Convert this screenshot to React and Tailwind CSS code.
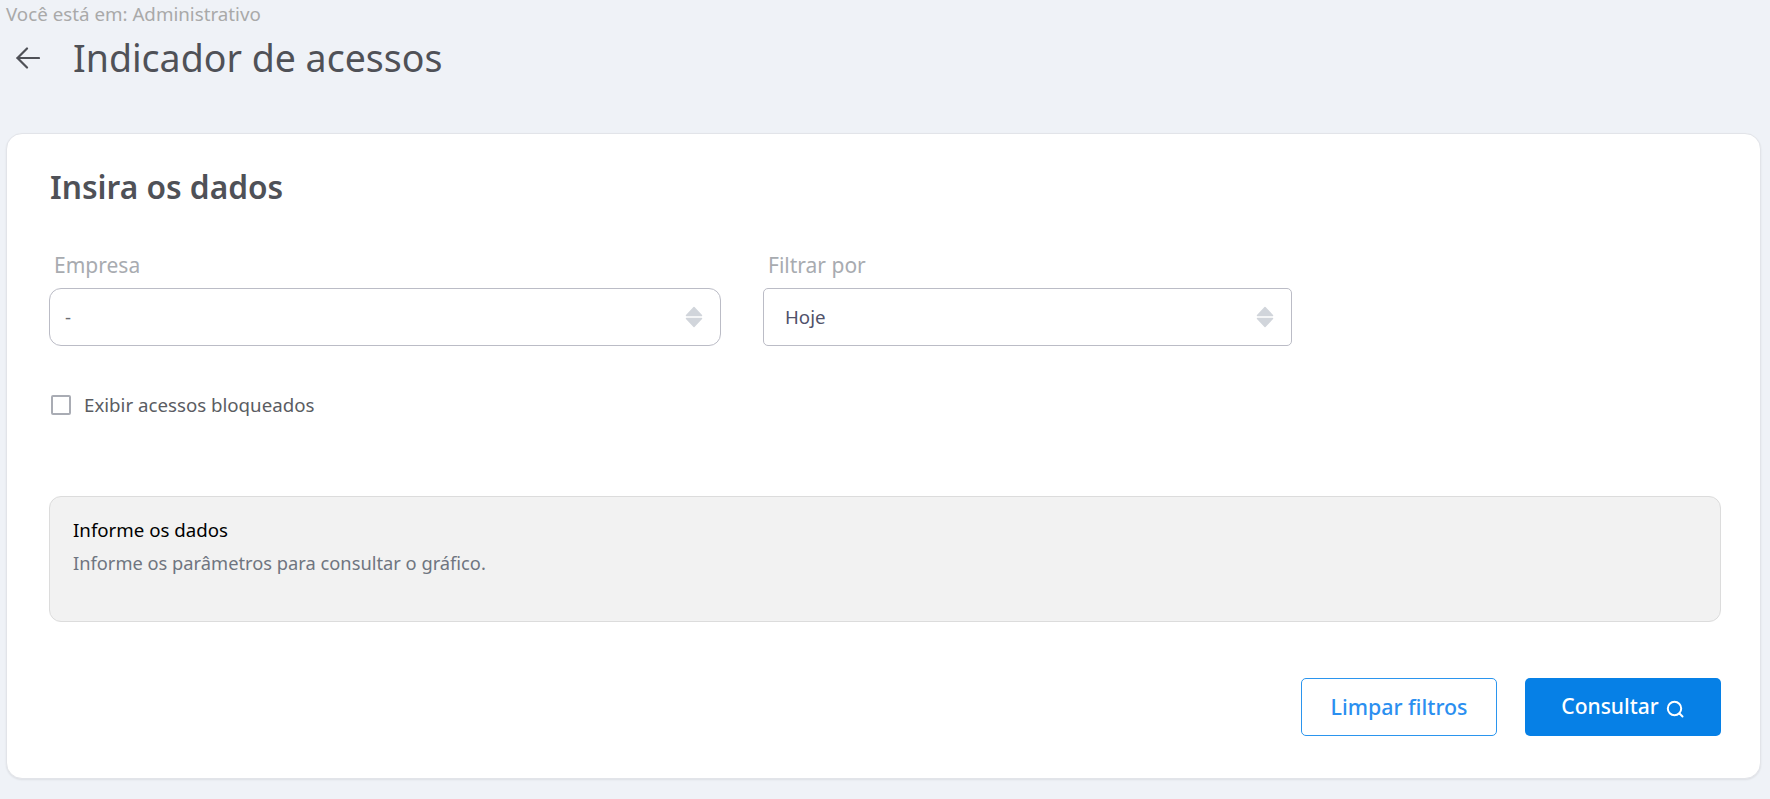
import React from 'react';

const Chevrons = () => (
  <svg width="18" height="22" viewBox="0 0 18 22" className="shrink-0">
    <path d="M9 1.5 L16.5 9.5 H1.5 Z" fill="#d1d5db" stroke="#d1d5db" strokeWidth="1.5" strokeLinejoin="round" />
    <path d="M9 20.5 L16.5 12.5 H1.5 Z" fill="#d1d5db" stroke="#d1d5db" strokeWidth="1.5" strokeLinejoin="round" />
  </svg>
);

const SelectField = ({ label, value, className, rounded, padding, valueColor }) => (
  <div className={className}>
    <div className="h-[40px] pl-[5px] pt-[3px] text-[21px] leading-[28px] text-[#a8abb0]">{label}</div>
    <div className={`flex h-[58px] items-center justify-between border border-[#bbbcc6] bg-white ${rounded} ${padding}`}>
      <span className={`text-[18.7px] ${valueColor}`}>{value}</span>
      <Chevrons />
    </div>
  </div>
);

export default function App() {
  return (
    <div className="h-[799px] overflow-hidden bg-[#eff2f7] font-['Noto_Sans',sans-serif]">
      <div className="h-[28px] pl-[6px] text-[18.75px] leading-[28px] text-[#a9a9a9]">Você está em: Administrativo</div>
      <div className="flex h-[60px] items-center pl-[16px]">
        <svg width="24" height="24" viewBox="0 0 24 24" fill="none" stroke="#4f5157" strokeWidth="2.2" strokeLinecap="round" strokeLinejoin="round">
          <path d="M23 12 H1.5" />
          <path d="M11 2.5 L1.5 12 L11 21.5" />
        </svg>
        <h1 className="ml-[33px] text-[37.5px] leading-[48px] font-normal text-[#4f5157]">Indicador de acessos</h1>
      </div>

      <div className="mx-[6px] mt-[45px] h-[646px] w-[1755px] rounded-[16px] border border-[#e2e4e9] bg-white px-[42px] shadow-[0_1px_2px_rgba(0,0,0,0.08)]">
        <h2 className="mt-[32px] h-[50px] pl-[1px] text-[31.7px] leading-[42px] font-semibold text-[#4f5157]">Insira os dados</h2>

        <div className="mt-[32px] flex gap-[42px]">
          <SelectField label="Empresa" value="-" className="w-[672px]" rounded="rounded-[12px]" padding="pl-[15px] pr-[17px]" valueColor="text-[#6b6e75]" />
          <SelectField label="Filtrar por" value="Hoje" className="w-[529px]" rounded="rounded-[5px]" padding="pl-[21px] pr-[17px]" valueColor="text-[#50526a]" />
        </div>

        <label className="mt-[49px] ml-[2px] flex h-[20px] items-center gap-[13px]">
          <span className="h-[20px] w-[20px] rounded-[2px] border-2 border-[#a9acb4] bg-white" />
          <span className="text-[18.7px] text-[#5a5c62]">Exibir acessos bloqueados</span>
        </label>

        <div className="mt-[81px] h-[126px] w-[1672px] rounded-[12px] border border-[#dcdcdc] bg-[#f2f2f2] px-[23px] pt-[20px]">
          <div className="text-[18.7px] leading-[26px] text-black">Informe os dados</div>
          <div className="mt-[7px] text-[18.3px] leading-[26px] text-[#6f7580]">Informe os parâmetros para consultar o gráfico.</div>
        </div>

        <div className="mt-[56px] flex w-[1672px] justify-end gap-[28px]">
          <button className="h-[58px] w-[196px] rounded-[5px] border border-[#2b95ee] bg-white text-[21.4px] font-medium text-[#2b8ff0]">Limpar filtros</button>
          <button className="flex h-[58px] w-[196px] items-center justify-center gap-[6px] rounded-[5px] bg-[#0680e6] text-[21px] font-medium text-white">
            Consultar
            <svg width="20" height="20" viewBox="0 0 20 20" fill="none" stroke="white" strokeWidth="2" strokeLinecap="round" className="mt-[3px]">
              <circle cx="9.5" cy="9.5" r="6.7" />
              <path d="M14.5 14.5 L17.5 17.5" />
            </svg>
          </button>
        </div>
      </div>
    </div>
  );
}
